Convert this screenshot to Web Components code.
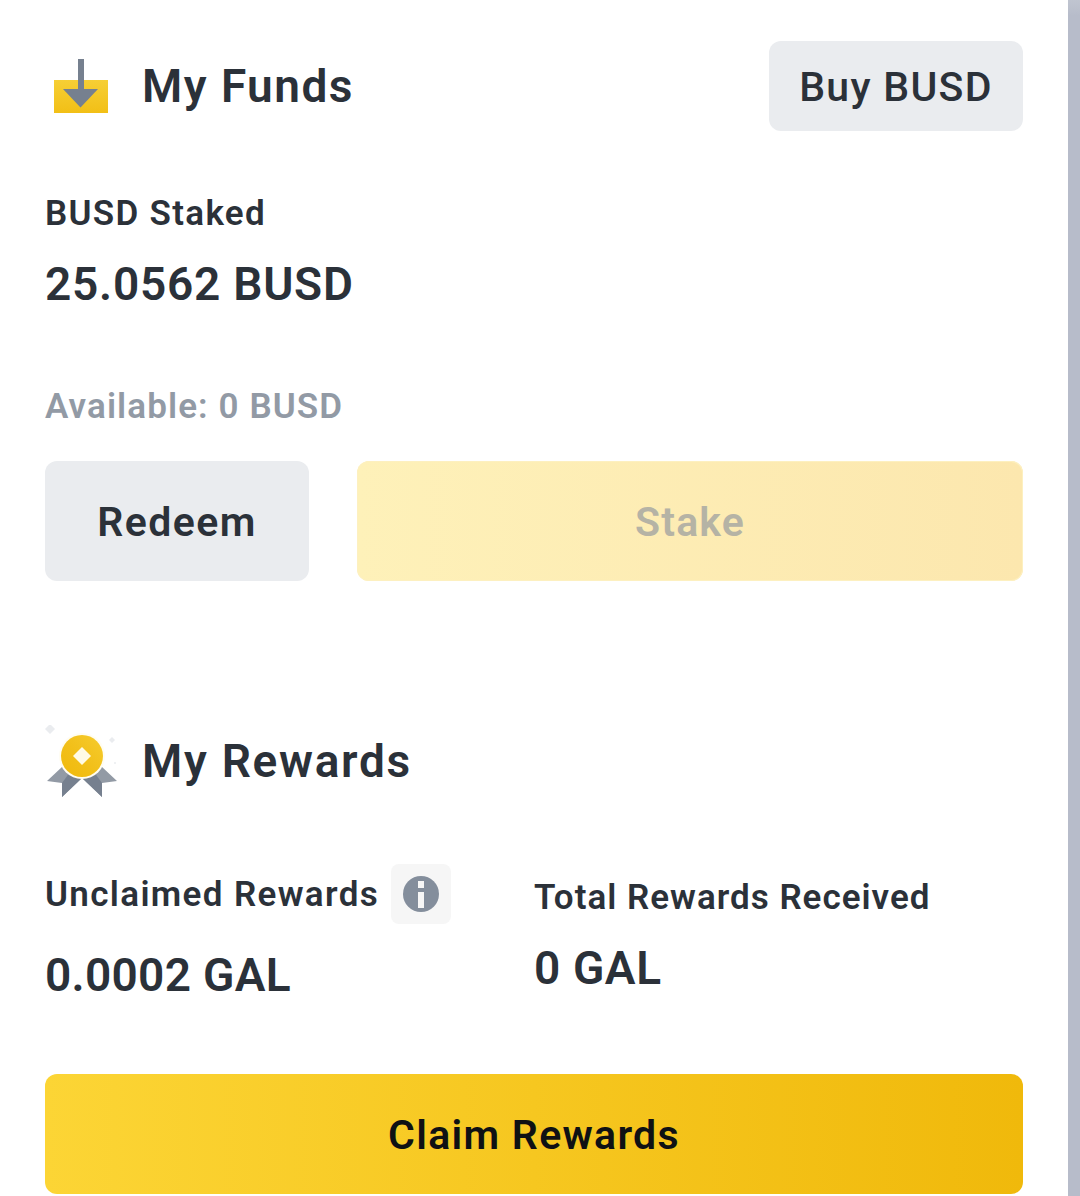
<!DOCTYPE html>
<html><head><meta charset="utf-8"><style>
html,body{margin:0;padding:0;background:#fff}
body{font-family:Roboto,"Liberation Sans",sans-serif;color:#1e2329;width:1080px;height:1196px;overflow:hidden}
</style></head><body>
<app-page>
<section-head style="--h:90px;--ls:1.45px" title-text="My Funds"><funds-icon slot="icon"></funds-icon><ui-button slot="action" kind="grey" style="width:254px;height:90px;font-size:41px;font-weight:500;letter-spacing:1.3px;--pt:2px">Buy BUSD</ui-button></section-head>
<stat-block style="margin-top:62px;--ls:1.3px;--vls:.75px" label="BUSD Staked" value="25.0562 BUSD" gap="23"></stat-block>
<div style="margin-top:74px;font-size:35px;line-height:42px;font-weight:600;color:#929aa5;letter-spacing:1.1px">Available: 0 BUSD</div>
<div style="display:flex;gap:48px;margin-top:33px">
<ui-button kind="grey" style="width:264px;height:120px;letter-spacing:1.4px">Redeem</ui-button>
<ui-button kind="disabled" style="flex:1;height:120px">Stake</ui-button>
</div>
<section-head style="--h:72px;--ls:1.7px;margin-top:144px" title-text="My Rewards"><rewards-icon slot="icon"></rewards-icon></section-head>
<div style="display:flex;margin-top:77px;height:136px">
<stat-block style="width:489px;--ls:1.35px;--vls:.3px" label="Unclaimed Rewards" value="0.0002 GAL" info gap="33"></stat-block>
<stat-block style="margin-top:3px;--ls:1px;--vls:.6px" label="Total Rewards Received" value="0 GAL" gap="23"></stat-block>
</div>
<ui-button kind="primary" style="height:120px;margin-top:64px;letter-spacing:1.3px">Claim Rewards</ui-button>
</app-page>
<script>
const def=(n,html)=>customElements.define(n,class extends HTMLElement{connectedCallback(){if(this.shadowRoot)return;const s=this.attachShadow({mode:'open'});s.innerHTML=typeof html==='function'?html(this):html;}});
def('app-page',`<style>:host{display:flex;width:1080px;height:1196px}
main{box-sizing:border-box;width:1068px;padding:41px 45px 0}
.bar{width:12px;background:linear-gradient(#c0c5d0 0,#b7bcca 16px,#b7bcca 100%)}</style><main><slot></slot></main><div class="bar"></div>`);
def('section-head',e=>`<style>:host{display:flex;align-items:center;justify-content:space-between;height:var(--h)}
.l{display:flex;align-items:center}h2{margin:0 0 0 25px;font-size:46px;line-height:56px;font-weight:600;color:#2b3139;letter-spacing:var(--ls);white-space:nowrap}</style>
<div class="l"><slot name="icon"></slot><h2>${e.getAttribute('title-text')}</h2></div><slot name="action"></slot>`);
def('stat-block',e=>`<style>:host{display:block}
.lb{display:flex;align-items:center;height:40px;font-size:35px;font-weight:600;color:#2b3139;letter-spacing:var(--ls);white-space:nowrap}
.v{font-size:46px;line-height:56px;font-weight:600;color:#2b3139;margin-top:${e.getAttribute('gap')||15}px;letter-spacing:var(--vls);white-space:nowrap}
.i{display:flex;align-items:center;justify-content:center;width:60px;height:60px;border-radius:8px;background:#f6f6f6;margin:-10px 0 -10px 12px;flex:none}</style>
<div class="lb">${e.getAttribute('label')}${e.hasAttribute('info')?`<span class="i"><svg width="36" height="36" viewBox="0 0 36 36"><circle cx="18" cy="18" r="18" fill="#848e9c"/><rect x="15" y="5" width="6" height="7" fill="#f6f6f6"/><rect x="15" y="16" width="6" height="16" fill="#f6f6f6"/></svg></span>`:''}</div><div class="v">${e.getAttribute('value')}</div>`);
def('ui-button',e=>{const k=e.getAttribute('kind');const m={grey:'background:#eaecef;color:#2b3139',disabled:'background:linear-gradient(90deg,#fef1b9,#fce7ae);color:#b5b3a5;box-shadow:inset 0 0 0 1px #fdf0c0',primary:'background:linear-gradient(90deg,#fcd535,#f0b90b);color:#0f1114'}[k];
return `<style>:host{display:flex;font-size:41px;font-weight:600;box-sizing:border-box;letter-spacing:1.2px}
div{flex:1;display:flex;align-items:center;justify-content:center;box-sizing:border-box;padding-top:var(--pt,2px);border-radius:12px;${m}}</style><div><slot></slot></div>`});
def('funds-icon',`<style>:host{display:block;width:72px;height:72px}</style><svg width="72" height="72" viewBox="0 0 72 72"><defs><linearGradient id="g" x1="0" y1="0" x2="0" y2="1"><stop offset="0" stop-color="#f6cf35"/><stop offset="1" stop-color="#f2bf16"/></linearGradient></defs><rect x="9" y="30" width="54" height="33" fill="url(#g)"/><rect x="33" y="9" width="6" height="32" fill="#76808f"/><path d="M18 39H53L35.5 57.500Z" fill="#76808f"/></svg>`);
def('rewards-icon',`<style>:host{display:block;width:72px;height:72px}</style><svg width="72" height="72" viewBox="0 0 72 72"><defs><linearGradient id="c" x1="1" y1="0" x2="0" y2="1"><stop offset="0" stop-color="#f6cc2e"/><stop offset=".5" stop-color="#f2c01a"/><stop offset="1" stop-color="#f0b90b"/></linearGradient></defs><path d="M17 42 2 56 17 58 17 72 37 53 57 72 57 58 72 56 57 42Z" fill="#929aa5"/><path d="M37 53 17 72 17 58 25 47Z" fill="#76808f"/><path d="M37 53 57 72 57 58 49 47Z" fill="#76808f"/><circle cx="37" cy="31" r="23" fill="#fffdf2"/><circle cx="37" cy="31" r="21" fill="url(#c)"/><path d="M37 22 46 31 37 40 28 31Z" fill="#fffbe6"/><path d="M5 -1 10 4 5 9 0 4Z" fill="#eaecef"/><path d="M67 12 70 15 67 18 64 15Z" fill="#eaecef"/><circle cx="70" cy="38" r="1" fill="#eaecef"/></svg>`);
</script></body></html>
